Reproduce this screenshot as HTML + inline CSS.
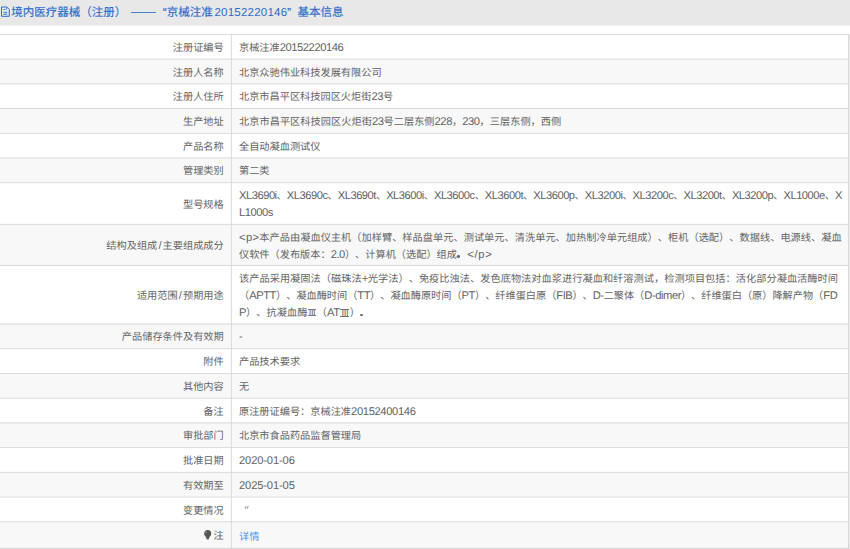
<!DOCTYPE html>
<html lang="zh-CN"><head><meta charset="utf-8"><style>
*{margin:0;padding:0;box-sizing:border-box}
html,body{width:850px;height:549px;overflow:hidden;background:#fff;font-family:"Liberation Sans",sans-serif;text-rendering:geometricPrecision;text-spacing-trim:space-all}
svg.grid{position:absolute;left:0;top:0}
.hd{position:absolute;top:0;color:#2c6cc8;-webkit-text-stroke:0.15px #2c6cc8;font-size:11.5px;line-height:26px;white-space:nowrap}
.lab,.val{position:absolute;white-space:nowrap;color:#636363;font-size:10.2px;line-height:17px}
.lab{right:626.3px;text-align:right}
.val{left:239px}
.lnk{color:#4893ee}
.L{font-size:11.2px;letter-spacing:-0.45px}
#v6_0 .L{letter-spacing:-0.4940px}
#v12_0 .L{letter-spacing:-0.3600px}
#v14_0 .L{letter-spacing:-0.1500px}
#v15_0 .L{letter-spacing:-0.1500px}
</style></head><body>
<svg class="grid" width="850" height="549" viewBox="0 0 850 549"><rect x="0" y="0" width="850" height="25.5" fill="#e8e8e8"/><rect x="0" y="58.70" width="848" height="24.72" fill="#f8f8f8"/><rect x="0" y="108.14" width="848" height="24.72" fill="#f8f8f8"/><rect x="0" y="157.57" width="848" height="24.72" fill="#f8f8f8"/><rect x="0" y="223.89" width="848" height="41.20" fill="#f8f8f8"/><rect x="0" y="323.59" width="848" height="24.72" fill="#f8f8f8"/><rect x="0" y="373.03" width="848" height="24.72" fill="#f8f8f8"/><rect x="0" y="422.47" width="848" height="24.72" fill="#f8f8f8"/><rect x="0" y="471.91" width="848" height="24.72" fill="#f8f8f8"/><rect x="0" y="521.36" width="848" height="26.64" fill="#f8f8f8"/><rect x="0" y="33.98" width="849" height="0.85" fill="#d5d5d5"/><rect x="0" y="58.70" width="849" height="0.85" fill="#d5d5d5"/><rect x="0" y="83.42" width="849" height="0.85" fill="#d5d5d5"/><rect x="0" y="108.14" width="849" height="0.85" fill="#d5d5d5"/><rect x="0" y="132.85" width="849" height="0.85" fill="#d5d5d5"/><rect x="0" y="157.57" width="849" height="0.85" fill="#d5d5d5"/><rect x="0" y="182.29" width="849" height="0.85" fill="#d5d5d5"/><rect x="0" y="223.89" width="849" height="0.85" fill="#d5d5d5"/><rect x="0" y="265.09" width="849" height="0.85" fill="#d5d5d5"/><rect x="0" y="323.59" width="849" height="0.85" fill="#d5d5d5"/><rect x="0" y="348.31" width="849" height="0.85" fill="#d5d5d5"/><rect x="0" y="373.03" width="849" height="0.85" fill="#d5d5d5"/><rect x="0" y="397.75" width="849" height="0.85" fill="#d5d5d5"/><rect x="0" y="422.47" width="849" height="0.85" fill="#d5d5d5"/><rect x="0" y="447.19" width="849" height="0.85" fill="#d5d5d5"/><rect x="0" y="471.91" width="849" height="0.85" fill="#d5d5d5"/><rect x="0" y="496.63" width="849" height="0.85" fill="#d5d5d5"/><rect x="0" y="521.36" width="849" height="0.85" fill="#d5d5d5"/><rect x="0" y="547.9" width="849" height="1.1" fill="#d5d5d5"/><rect x="230.9" y="34" width="0.85" height="515" fill="#d5d5d5"/><rect x="849" y="34" width="1" height="515" fill="#ececec"/><rect x="848.1" y="34" width="0.9" height="515" fill="#d5d5d5"/><g fill="none" stroke="#2c6cc8" stroke-width="1"><path d="M1.5 7H6.8L9.3 9.5V16.3H1.5Z"/><path d="M6.5 7.6V9.6" stroke-width="0.8"/><path d="M3.3 9.6H5.4M3.3 12.4H7.2M3.3 14.3H7.2" stroke-width="0.9"/></g></svg><div class="hd" style="left:11.3px">境内医疗器械（注册）</div><div style="position:absolute;left:131.1px;top:12.2px;width:25.1px;height:1.1px;background:#4a82d4"></div><div class="hd" style="left:162.8px">“京械注准<span style="letter-spacing:0.23px;margin-left:1.8px;-webkit-text-stroke:0px">20152220146</span>”</div><div class="hd" style="left:297.6px">基本信息</div>
<div class="val" id="v0_0" style="top:39.88px">京械注准<span class="L">20152220146</span></div><div class="lab" id="l0" style="top:39.88px">注册证编号</div>
<div class="val" id="v1_0" style="top:64.59px">北京众驰伟业科技发展有限公司</div><div class="lab" id="l1" style="top:64.59px">注册人名称</div>
<div class="val" id="v2_0" style="top:89.32px">北京市昌平区科技园区火炬街<span class="L">23</span>号</div><div class="lab" id="l2" style="top:89.32px">注册人住所</div>
<div class="val" id="v3_0" style="top:114.04px;letter-spacing:0.0370px">北京市昌平区科技园区火炬街<span class="L">23</span>号二层东侧<span class="L">228</span>，<span class="L">230</span>，三层东侧，西侧</div><div class="lab" id="l3" style="top:114.04px">生产地址</div>
<div class="val" id="v4_0" style="top:138.75px">全自动凝血测试仪</div><div class="lab" id="l4" style="top:138.75px">产品名称</div>
<div class="val" id="v5_0" style="top:163.47px">第二类</div><div class="lab" id="l5" style="top:163.47px">管理类别</div>
<div class="val" id="v6_0" style="top:188.19px"><span class="L">XL3690i</span>、<span class="L">XL3690c</span>、<span class="L">XL3690t</span>、<span class="L">XL3600i</span>、<span class="L">XL3600c</span>、<span class="L">XL3600t</span>、<span class="L">XL3600p</span>、<span class="L">XL3200i</span>、<span class="L">XL3200c</span>、<span class="L">XL3200t</span>、<span class="L">XL3200p</span>、<span class="L">XL1000e</span>、<span class="L">X</span></div><div class="val" id="v6_1" style="top:205.19px"><span class="L">L1000s</span></div><div class="lab" id="l6" style="top:196.69px">型号规格</div>
<div class="val" id="v7_0" style="top:229.79px;letter-spacing:0.0290px"><span class="L" style="letter-spacing:0.35px">&lt;p&gt;</span>本产品由凝血仪主机（加样臂、样品盘单元、测试单元、清洗单元、加热制冷单元组成）、柜机（选配）、数据线、电源线、凝血</div><div class="val" id="v7_1" style="top:246.79px">仪软件（发布版本：<span class="L">2.0</span>）、计算机（选配）组成<span style="display:inline-block;width:10.2px;position:relative"><i style="position:absolute;left:0.4px;top:-2.3px;width:2.5px;height:2.5px;border-radius:50%;background:#6a6a6a"></i></span><span class="L" style="letter-spacing:0.75px">&lt;/p&gt;</span></div><div class="lab" id="l7" style="top:238.29px">结构及组成<span style="margin:0 1.1px;font-size:11.2px">/</span>主要组成成分</div>
<div class="val" id="v8_0" style="top:270.99px;letter-spacing:0.0350px">该产品采用凝固法（磁珠法<span class="L">+</span>光学法）、免疫比浊法、发色底物法对血浆进行凝血和纤溶测试，检测项目包括：活化部分凝血活酶时间</div><div class="val" id="v8_1" style="top:287.99px;letter-spacing:-0.0220px">（<span class="L">APTT</span>）、凝血酶时间（<span class="L">TT</span>）、凝血酶原时间（<span class="L">PT</span>）、纤维蛋白原（<span class="L">FIB</span>）、<span class="L">D-</span>二聚体（<span class="L">D-dimer</span>）、纤维蛋白（原）降解产物（<span class="L">FD</span></div><div class="val" id="v8_2" style="top:304.99px;letter-spacing:0.0700px"><span class="L">P</span>）、抗凝血酶<span style="display:inline-block;border-top:1px solid #777;border-bottom:1px solid #777;height:7.6px;line-height:7.6px;width:7.8px;text-align:center;vertical-align:-0.3px;margin:0 0.7px;overflow:hidden"><b style="font-weight:normal;display:inline-block;transform:scaleX(0.8)"><span class="L">III</span></b></span>（<span class="L">AT</span><span style="display:inline-block;border-top:1px solid #777;border-bottom:1px solid #777;height:8.2px;line-height:8.2px;width:8.6px;text-align:center;vertical-align:-0.9px;margin:0 0.8px"><b style="font-weight:normal;display:inline-block;transform:scaleX(0.85)"><span class="L">III</span></b></span>）<span style="display:inline-block;width:10.2px;position:relative"><i style="position:absolute;left:0.4px;top:-2.3px;width:2.5px;height:2.5px;border-radius:50%;background:#6a6a6a"></i></span></div><div class="lab" id="l8" style="top:287.99px">适用范围<span style="margin:0 1.1px;font-size:11.2px">/</span>预期用途</div>
<div class="val" id="v9_0" style="top:329.49px"><span class="L">-</span></div><div class="lab" id="l9" style="top:329.49px">产品储存条件及有效期</div>
<div class="val" id="v10_0" style="top:354.21px">产品技术要求</div><div class="lab" id="l10" style="top:354.21px">附件</div>
<div class="val" id="v11_0" style="top:378.93px">无</div><div class="lab" id="l11" style="top:378.93px">其他内容</div>
<div class="val" id="v12_0" style="top:403.65px">原注册证编号：京械注准<span class="L">20152400146</span></div><div class="lab" id="l12" style="top:403.65px">备注</div>
<div class="val" id="v13_0" style="top:428.37px">北京市食品药品监督管理局</div><div class="lab" id="l13" style="top:428.37px">审批部门</div>
<div class="val" id="v14_0" style="top:453.09px"><span class="L">2020-01-06</span></div><div class="lab" id="l14" style="top:453.09px">批准日期</div>
<div class="val" id="v15_0" style="top:477.81px"><span class="L">2025-01-05</span></div><div class="lab" id="l15" style="top:477.81px">有效期至</div>
<div class="val" id="v16_0" style="top:502.54px"><svg width="12" height="12" style="position:absolute;left:0;top:0"><path d="M7.2 3.2L6.2 5.6M9.2 3.2L8.2 5.6" stroke="#888" stroke-width="1"/></svg></div><div class="lab" id="l16" style="top:502.54px">变更情况</div>
<div class="val" id="v17_0" style="top:528.86px"><span class="lnk">详情</span></div><div class="lab" id="l17" style="top:528.46px"><svg width="8" height="10" viewBox="0 0 8 10" style="vertical-align:-1px;margin-right:1.6px"><circle cx="3.7" cy="3.6" r="3.5" fill="#555"/><path d="M1.6 6.2L2.8 9.6H4.6L5.8 6.2Z" fill="#555"/><path d="M1.5 3.2A2.2 2.2 0 0 1 3 1.4" stroke="#aac" stroke-width="0.7" fill="none"/></svg>注</div>
</body></html>
